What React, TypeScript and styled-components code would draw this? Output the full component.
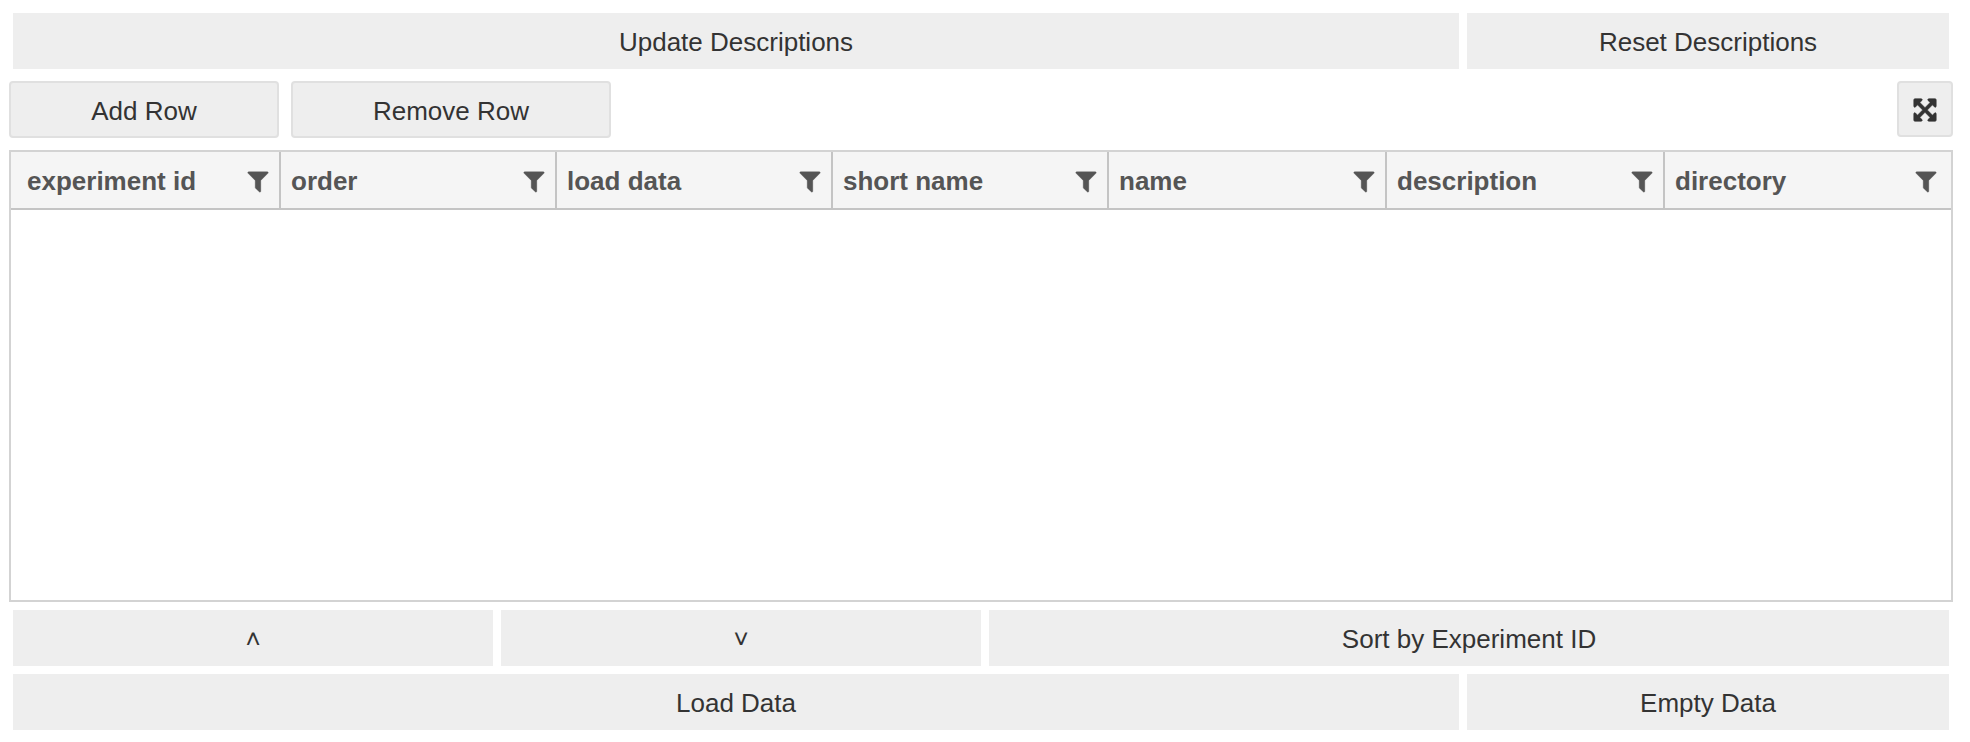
import React from "react";
import styled, { createGlobalStyle } from "styled-components";

const GlobalStyle = createGlobalStyle`
  *, *::before, *::after { box-sizing: border-box; }
  body {
    margin: 0;
    background: #fff;
    color: #333;
    font-family: "Liberation Sans", Helvetica, Arial, sans-serif;
    font-size: 26px;
  }
`;

const Page = styled.main`
  display: flex;
  flex-direction: column;
  width: 1970px;
  height: 742px;
  padding: 13px 17px 12px 9px;
`;

const ButtonRow = styled.div<{ $columns: string }>`
  display: grid;
  grid-template-columns: ${(p) => p.$columns};
  gap: 8px;
  height: 56px;
  margin: 0 4px;
`;

const WidgetButton = styled.button`
  border: 0;
  padding: 2px 0 0;
  background: #eee;
  color: #333;
  font: inherit;
  line-height: 54px;
`;

const Toolbar = styled.div`
  display: flex;
  align-items: flex-start;
  gap: 12px;
  margin: 12px 0;
`;

const ToolButton = styled.button<{ $width: number }>`
  display: flex;
  align-items: center;
  justify-content: center;
  width: ${(p) => p.$width}px;
  height: 57px;
  padding: 3px 0 0;
  border: 2px solid #e0e0e0;
  border-radius: 4px;
  background: #eee;
  color: #333;
  font: inherit;
`;

const ExpandButton = styled(ToolButton)`
  height: 56px;
  margin-left: auto;
  padding-top: 1px;
`;

const Grid = styled.section`
  height: 452px;
  border: 2px solid #d3d3d3;
  background: #fff;
`;

const HeaderRow = styled.div`
  display: flex;
  height: 58px;
  border-bottom: 2px solid #c4c4c4;
  background: #f5f5f5;
`;

const HeaderCell = styled.div<{ $width: number }>`
  display: flex;
  align-items: center;
  justify-content: space-between;
  width: ${(p) => p.$width}px;
  padding: 2px 8px 0 10px;
  border-right: 2px solid #c4c4c4;
  color: #555;
  font-weight: bold;
  line-height: 30px;

  &:first-child { padding-left: 16px; }
  &:last-child { padding-right: 12px; border-right: 0; }
`;

const Label = styled.span``;

const Icon = styled.svg<{ $weight: number }>`
  display: block;
  width: 26px;
  height: 26px;
  fill: currentColor;
  stroke: currentColor;
  stroke-width: ${(p) => p.$weight};
`;

const Footer = styled.div`
  display: flex;
  flex-direction: column;
  gap: 8px;
  margin-top: 8px;
`;

const FilterIcon = () => (
  <Icon $weight={24} viewBox="0 0 1792 1792">
    <path d="M1595 295q17 41-14 70l-493 493v742q0 42-39 59-13 5-25 5-27 0-45-19l-256-256q-19-19-19-45v-486l-493-493q-31-29-14-70 17-39 59-39h1280q42 0 59 39z" />
  </Icon>
);

const ExpandIcon = () => (
  <Icon $weight={48} viewBox="0 0 1792 1792">
    <path d="M1411 541l-355 355 355 355 144-144q29-31 70-14 39 17 39 59v448q0 26-19 45t-45 19h-448q-42 0-59-40-17-39 14-69l144-144-355-355-355 355 144 144q31 30 14 69-17 40-59 40h-448q-26 0-45-19t-19-45v-448q0-42 40-59 39-17 69 14l144 144 355-355-355-355-144 144q-19 19-45 19-12 0-24-5-40-17-40-59v-448q0-26 19-45t45-19h448q42 0 59 40 17 39-14 69l-144 144 355 355 355-355-144-144q-31-30-14-69 17-40 59-40h448q26 0 45 19t19 45v448q0 42-39 59-13 5-25 5-26 0-45-19z" />
  </Icon>
);

const columns = [
  { name: "experiment id", width: 270 },
  { name: "order", width: 276 },
  { name: "load data", width: 276 },
  { name: "short name", width: 276 },
  { name: "name", width: 278 },
  { name: "description", width: 278 },
  { name: "directory", width: 286 },
];

const WIDE_NARROW = "1446px 1fr";

export default function App() {
  return (
    <>
      <GlobalStyle />
      <Page>
        <ButtonRow $columns={WIDE_NARROW}>
          <WidgetButton>Update Descriptions</WidgetButton>
          <WidgetButton>Reset Descriptions</WidgetButton>
        </ButtonRow>
        <Toolbar>
          <ToolButton $width={270}>Add Row</ToolButton>
          <ToolButton $width={320}>Remove Row</ToolButton>
          <ExpandButton $width={56} aria-label="Toggle full screen">
            <ExpandIcon />
          </ExpandButton>
        </Toolbar>
        <Grid>
          <HeaderRow>
            {columns.map((c) => (
              <HeaderCell key={c.name} $width={c.width}>
                <Label>{c.name}</Label>
                <FilterIcon />
              </HeaderCell>
            ))}
          </HeaderRow>
        </Grid>
        <Footer>
          <ButtonRow $columns="480px 480px 1fr">
            <WidgetButton>˄</WidgetButton>
            <WidgetButton>˅</WidgetButton>
            <WidgetButton>Sort by Experiment ID</WidgetButton>
          </ButtonRow>
          <ButtonRow $columns={WIDE_NARROW}>
            <WidgetButton>Load Data</WidgetButton>
            <WidgetButton>Empty Data</WidgetButton>
          </ButtonRow>
        </Footer>
      </Page>
    </>
  );
}
